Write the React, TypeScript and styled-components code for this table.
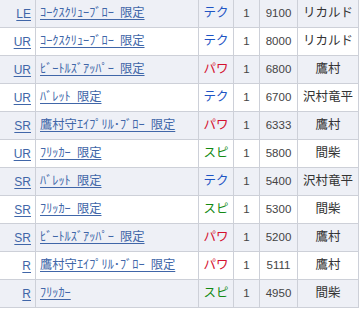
import React from 'react';
import styled, { createGlobalStyle } from 'styled-components';

type TType = 'tech' | 'power' | 'speed';

type TCardRow = {
  rarity: string;
  name: string;
  type: TType;
  cost: number;
  value: number;
  chara: string;
};

const TYPE_LABEL: Record<TType, string> = {
  tech: 'テク',
  power: 'パワ',
  speed: 'スピ',
};

const TYPE_COLOR: Record<TType, string> = {
  tech: '#1f55c4',
  power: '#d4102e',
  speed: '#138a13',
};

const rows: TCardRow[] = [
  { rarity: 'LE', name: 'ｺｰｸｽｸﾘｭｰﾌﾞﾛｰ 限定', type: 'tech', cost: 1, value: 9100, chara: 'リカルド' },
  { rarity: 'UR', name: 'ｺｰｸｽｸﾘｭｰﾌﾞﾛｰ 限定', type: 'tech', cost: 1, value: 8000, chara: 'リカルド' },
  { rarity: 'UR', name: 'ﾋﾞｰﾄﾙｽﾞｱｯﾊﾟｰ 限定', type: 'power', cost: 1, value: 6800, chara: '鷹村' },
  { rarity: 'UR', name: 'ﾊﾞﾚｯﾄ 限定', type: 'tech', cost: 1, value: 6700, chara: '沢村竜平' },
  { rarity: 'SR', name: '鷹村守ｴｲﾌﾟﾘﾙ･ﾌﾞﾛｰ 限定', type: 'power', cost: 1, value: 6333, chara: '鷹村' },
  { rarity: 'UR', name: 'ﾌﾘｯｶｰ 限定', type: 'speed', cost: 1, value: 5800, chara: '間柴' },
  { rarity: 'SR', name: 'ﾊﾞﾚｯﾄ 限定', type: 'tech', cost: 1, value: 5400, chara: '沢村竜平' },
  { rarity: 'SR', name: 'ﾌﾘｯｶｰ 限定', type: 'speed', cost: 1, value: 5300, chara: '間柴' },
  { rarity: 'SR', name: 'ﾋﾞｰﾄﾙｽﾞｱｯﾊﾟｰ 限定', type: 'power', cost: 1, value: 5200, chara: '鷹村' },
  { rarity: 'R', name: '鷹村守ｴｲﾌﾟﾘﾙ･ﾌﾞﾛｰ 限定', type: 'power', cost: 1, value: 5111, chara: '鷹村' },
  { rarity: 'R', name: 'ﾌﾘｯｶｰ', type: 'speed', cost: 1, value: 4950, chara: '間柴' },
];

const GlobalStyle = createGlobalStyle`
  html, body {
    margin: 0;
    padding: 0;
    background: #ffffff;
  }
  body {
    font-family: "Liberation Sans", "Noto Sans CJK JP", sans-serif;
    font-size: 12px;
    color: #333333;
  }
`;

const Table = styled.table`
  width: 359px;
  table-layout: fixed;
  border-collapse: separate;
  border-spacing: 0;
`;

const Row = styled.tr<{ $shaded: boolean }>`
  height: 28px;
  background: ${(p) => (p.$shaded ? '#eef0f6' : '#ffffff')};
`;

const Cell = styled.td<{ $w: number; $align?: 'left' | 'center' | 'right' }>`
  box-sizing: border-box;
  width: ${(p) => p.$w}px;
  height: 28px;
  padding: 0 4px;
  border-right: 1px solid #cdd0d8;
  border-bottom: 1px solid #cdd0d8;
  text-align: ${(p) => p.$align ?? 'center'};
  vertical-align: middle;
  white-space: nowrap;
  overflow: hidden;
  line-height: 1;
`;

const NumCell = styled(Cell)`
  font-size: 11.5px;
  color: #444444;
`;

const Link = styled.a<{ $size?: number }>`
  color: #4066a8;
  font-size: ${(p) => p.$size ?? 12}px;
  text-decoration: underline;
  text-underline-offset: 2px;
  cursor: pointer;
`;

const TypeLabel = styled.span<{ $type: TType }>`
  color: ${(p) => TYPE_COLOR[p.$type]};
  font-size: 12.5px;
`;

const Chara = styled.span`
  font-size: 12.5px;
  color: #333333;
`;

const App: React.FC = () => {
  return (
    <>
      <GlobalStyle />
      <Table>
        <tbody>
          {rows.map((r, i) => (
            <Row key={i} $shaded={i % 2 === 0}>
              <Cell $w={36} $align='right'>
                <Link>{r.rarity}</Link>
              </Cell>
              <Cell $w={163} $align='left'>
                <Link $size={12.3}>{r.name.replace(' ', '\u2002')}</Link>
              </Cell>
              <Cell $w={35}>
                <TypeLabel $type={r.type}>{TYPE_LABEL[r.type]}</TypeLabel>
              </Cell>
              <NumCell $w={26}>{r.cost}</NumCell>
              <NumCell $w={38}>{r.value}</NumCell>
              <Cell $w={61}>
                <Chara>{r.chara}</Chara>
              </Cell>
            </Row>
          ))}
        </tbody>
      </Table>
    </>
  );
};

export default App;
